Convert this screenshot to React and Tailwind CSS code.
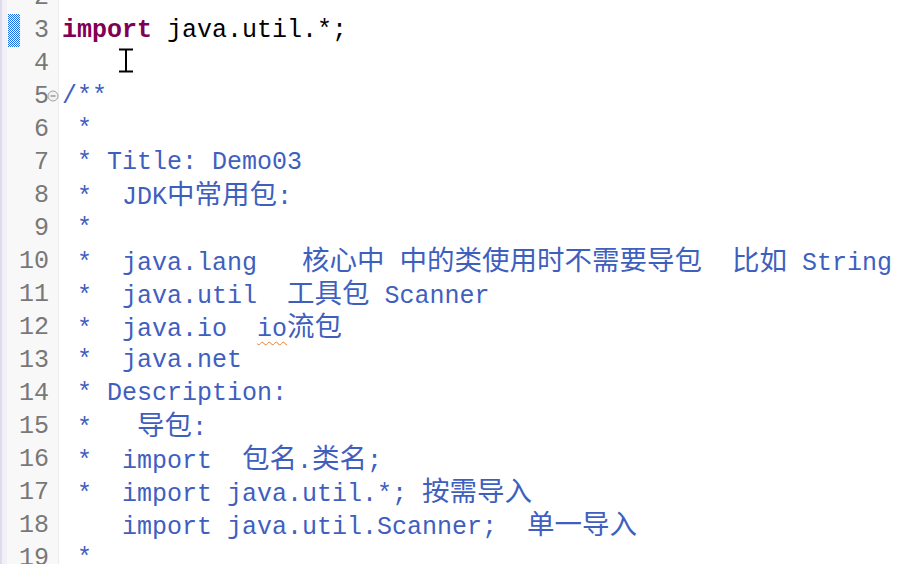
import React from 'react'

// k = keyword, n = plain, c = javadoc, z = javadoc in CJK, s = javadoc with spell squiggle
const LINES = [
  { no: 2, seg: [] },
  { no: 3, seg: [['import', 'k'], [' java.util.*;', 'n']], diff: true },
  { no: 4, seg: [] },
  { no: 5, seg: [['/**', 'c']], fold: true },
  { no: 6, seg: [[' *', 'c']] },
  { no: 7, seg: [[' * Title: Demo03', 'c']] },
  { no: 8, seg: [[' *  JDK', 'c'], ['中常用包', 'z'], [':', 'c']] },
  { no: 9, seg: [[' *', 'c']] },
  {
    no: 10,
    seg: [
      [' *  java.lang   ', 'c'],
      ['核心中', 'z'],
      [' ', 'c'],
      ['中的类使用时不需要导包', 'z'],
      ['  ', 'c'],
      ['比如', 'z'],
      [' String', 'c'],
    ],
  },
  { no: 11, seg: [[' *  java.util  ', 'c'], ['工具包', 'z'], [' Scanner', 'c']] },
  { no: 12, seg: [[' *  java.io  ', 'c'], ['io', 's'], ['流包', 'z']] },
  { no: 13, seg: [[' *  java.net', 'c']] },
  { no: 14, seg: [[' * Description:', 'c']] },
  { no: 15, seg: [[' *   ', 'c'], ['导包', 'z'], [':', 'c']] },
  { no: 16, seg: [[' *  import  ', 'c'], ['包名', 'z'], ['.', 'c'], ['类名', 'z'], [';', 'c']] },
  { no: 17, seg: [[' *  import java.util.*; ', 'c'], ['按需导入', 'z']] },
  { no: 18, seg: [['    import java.util.Scanner;  ', 'c'], ['单一导入', 'z']] },
  { no: 19, seg: [[' *', 'c']] },
]

const Segment = ({ text, type }) => {
  if (type === 'k') return <span className="font-bold text-[#7f0055]">{text}</span>
  if (type === 'n') return <span className="text-black">{text}</span>
  if (type === 'z')
    return (
      <span className="text-[27.5px] leading-none text-[#3f5fbf] font-['Noto_Sans_CJK_SC',sans-serif]">
        {text}
      </span>
    )
  if (type === 's')
    return (
      <span className="text-[#3f5fbf] underline decoration-wavy decoration-[#f07c32] decoration-1 underline-offset-[5px]">
        {text}
      </span>
    )
  return <span className="text-[#3f5fbf]">{text}</span>
}

const FoldIcon = () => (
  <svg width="12" height="12" viewBox="0 0 12 12" className="absolute right-[-1px] top-[10px]">
    <circle cx="6" cy="6" r="5" fill="#f2f2f2" stroke="#a0a0a0" strokeWidth="1" />
    <line x1="3.5" y1="6" x2="8.5" y2="6" stroke="#707070" strokeWidth="1" />
  </svg>
)

// quick diff "changed" marker, blue checkered
const DiffMarker = () => (
  <svg width="12" height="33" className="absolute left-[1px] top-0">
    <defs>
      <pattern id="chk" width="2" height="2" patternUnits="userSpaceOnUse">
        <rect width="2" height="2" fill="#ffffff" />
        <rect width="1" height="1" fill="#1a6be6" />
        <rect x="1" y="1" width="1" height="1" fill="#1a6be6" />
      </pattern>
    </defs>
    <rect width="12" height="33" fill="url(#chk)" />
  </svg>
)

export default function App() {
  return (
    <div className="relative w-[917px] h-[564px] overflow-hidden bg-white flex font-['Liberation_Mono','Noto_Sans_CJK_SC',monospace] text-[25px]">
      {/* left overview strip */}
      <div className="flex shrink-0">
        <div className="w-[2px] bg-[#dcdcec]" />
        <div className="w-[5px] bg-[#f0f0f6]" />
      </div>

      {/* line number ruler */}
      <div className="w-[52px] shrink-0 bg-[#f8f8f8] border-r border-[#ececec]">
        <div className="-mt-[19px]">
          {LINES.map(l => (
            <div key={l.no} className="relative h-[33px] leading-[33px] pr-[9px] text-right text-[#787878]">
              {l.diff && <DiffMarker />}
              {l.no}
              {l.fold && <FoldIcon />}
            </div>
          ))}
        </div>
      </div>

      {/* code area */}
      <div className="flex-1 pl-[3px]">
        <div className="-mt-[19px]">
          {LINES.map(l => (
            <div key={l.no} className="h-[33px] leading-[33px] whitespace-pre">
              {l.seg.map((s, i) => (
                <Segment key={i} text={s[0]} type={s[1]} />
              ))}
            </div>
          ))}
        </div>
      </div>

      {/* mouse I-beam pointer */}
      <svg width="16" height="26" viewBox="0 0 16 26" className="absolute left-[118px] top-[48px]">
        <line x1="1" y1="1.5" x2="15" y2="1.5" stroke="#000" strokeWidth="2" />
        <line x1="8" y1="1.5" x2="8" y2="23.5" stroke="#000" strokeWidth="2" />
        <line x1="1" y1="23.5" x2="15" y2="23.5" stroke="#000" strokeWidth="2" />
      </svg>
    </div>
  )
}
